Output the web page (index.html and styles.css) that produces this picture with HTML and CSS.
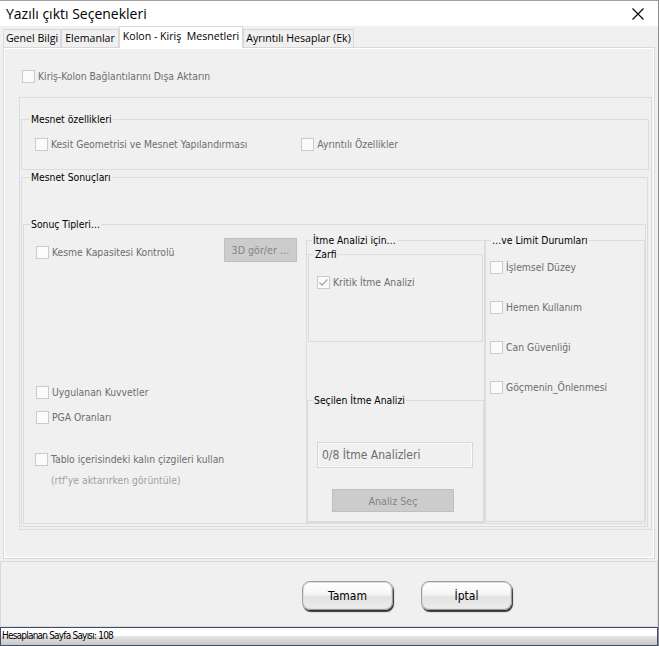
FILE: index.html
```html
<!DOCTYPE html>
<html lang="tr">
<head>
  <meta charset="UTF-8">
  <title>Yazılı çıktı Seçenekleri</title>
  <link rel="stylesheet" href="styles.css">
</head>
<body>
  <div class="window">
    <div class="titlebar">
      <span class="title">Yazılı çıktı Seçenekleri</span>
      <svg class="close" width="12" height="12" viewBox="0 0 12 12">
        <path d="M0.5 0.5 L11.5 11.5 M11.5 0.5 L0.5 11.5" stroke="#000" stroke-width="1.1" fill="none"/>
      </svg>
    </div>

    <div class="tabs">
      <div class="tab t1">Genel Bilgi</div>
      <div class="tab t2">Elemanlar</div>
      <div class="tab t3 active">Kolon - Kiriş&nbsp; Mesnetleri</div>
      <div class="tab t4">Ayrıntılı Hesaplar (Ek)</div>
    </div>

    <div class="page">
      <label class="check export"><span class="box"></span>Kiriş-Kolon Bağlantılarını Dışa Aktarın</label>

      <div class="panel">
        <fieldset class="props">
          <legend>Mesnet özellikleri</legend>
          <div class="props-row">
            <label class="check"><span class="box"></span>Kesit Geometrisi ve Mesnet Yapılandırması</label>
            <label class="check detail"><span class="box"></span>Ayrıntılı Özellikler</label>
          </div>
        </fieldset>

        <fieldset class="results">
          <legend>Mesnet Sonuçları</legend>
          <fieldset class="types">
            <legend>Sonuç Tipleri…</legend>
            <div class="types-cols">
              <div class="col-left">
                <div class="shear-row">
                  <label class="check"><span class="box"></span>Kesme Kapasitesi Kontrolü</label>
                  <button class="gray-btn view3d">3D gör/er …</button>
                </div>
                <label class="check forces"><span class="box"></span>Uygulanan Kuvvetler</label>
                <label class="check pga"><span class="box"></span>PGA Oranları</label>
                <label class="check bold-lines"><span class="box"></span>Tablo içerisindeki kalın çizgileri kullan</label>
                <div class="hint">(rtf'ye aktarırken görüntüle)</div>
              </div>

              <fieldset class="pushover">
                <legend>İtme Analizi için…</legend>
                <fieldset class="envelope">
                  <legend>Zarfi</legend>
                  <label class="check critical">
                    <span class="box">
                      <svg width="11" height="11" viewBox="0 0 11 11"><path d="M1.5 5.5 L4 8 L9.5 2.5" stroke="#a8a8a8" stroke-width="1.3" fill="none"/></svg>
                    </span>Kritik İtme Analizi
                  </label>
                </fieldset>
                <fieldset class="selected">
                  <legend>Seçilen İtme Analizi</legend>
                  <div class="count-box">0/8 İtme Analizleri</div>
                  <button class="gray-btn pick">Analiz Seç</button>
                </fieldset>
              </fieldset>

              <fieldset class="limits">
                <legend>…ve Limit Durumları</legend>
                <label class="check"><span class="box"></span>İşlemsel Düzey</label>
                <label class="check"><span class="box"></span>Hemen Kullanım</label>
                <label class="check"><span class="box"></span>Can Güvenliği</label>
                <label class="check"><span class="box"></span>Göçmenin_Önlenmesi</label>
              </fieldset>
            </div>
          </fieldset>
        </fieldset>
      </div>
    </div>

    <div class="footer">
      <button class="btn">Tamam</button>
      <button class="btn">İptal</button>
    </div>

    <div class="status">Hesaplanan Sayfa Sayısı: 108</div>
  </div>
</body>
</html>
```

FILE: styles.css
```css
* {
  box-sizing: border-box;
}

body {
  margin: 0;
  background-color: #f0f0f0;
  font-family: "DejaVu Sans Condensed", "DejaVu Sans", sans-serif;
  font-stretch: condensed;
  font-size: 10.3px;
}

.window {
  width: 659px;
  height: 646px;
  display: flex;
  flex-direction: column;
  border-right: 1px solid #8c8c8c;
  overflow: hidden;
}

.titlebar {
  height: 26px;
  flex: none;
  background-color: #fff;
  border-top: 1px solid #a0a0a0;
  display: flex;
  align-items: center;
  justify-content: space-between;
  padding: 0 14px 0 6px;
}

.title {
  font-family: "Open Sans", sans-serif;
  font-stretch: normal;
  font-size: 14px;
  color: #000;
}

/* tabs */
.tabs {
  height: 21px;
  flex: none;
  display: flex;
  align-items: flex-end;
  padding-left: 3px;
  font-family: "Open Sans", sans-serif;
  font-stretch: normal;
  font-size: 10.6px;
}

.tab {
  height: 18px;
  border: 1px solid #d9d9d9;
  border-bottom: none;
  background-color: #f0f0f0;
  text-align: center;
  line-height: 16px;
  color: #000;
  white-space: nowrap;
}

.t1 { width: 58px; }
.t2 { width: 58px; }
.t3 { width: 124px; }
.t4 { width: 111px; }

.tab.active {
  height: 22px;
  margin-bottom: -1px;
  background-color: #fff;
  line-height: 18px;
  position: relative;
  z-index: 1;
}

/* page */
.page {
  height: 512px;
  flex: none;
  margin: 0 3px;
  border: 1px solid #d9d9d9;
  box-shadow: inset 0 0 0 1px #fff;
}

.check {
  display: flex;
  align-items: center;
  height: 14px;
  color: #6d6d6d;
  white-space: nowrap;
}

.box {
  width: 13px;
  height: 13px;
  flex: none;
  margin-right: 3px;
  border: 1px solid #cbcbcb;
  background-color: #fbfbfb;
  display: flex;
  align-items: center;
  justify-content: center;
}

.export {
  margin: 21px 0 0 18px;
}

.panel {
  margin: 14px 0 0 15px;
  width: 633px;
  height: 433px;
  border: 1px solid #dcdcdc;
}

fieldset {
  margin: 0;
  padding: 0;
  min-width: 0;
  border: 1px solid #dcdcdc;
}

legend {
  padding: 0 1px;
  line-height: 14px;
  font-size: 10.3px;
  color: #000;
}

.props {
  margin: 14px 0 0 1px;
  width: 628px;
  height: 58px;
}

.props legend { margin-left: 8px; }

.props-row {
  display: flex;
  padding: 11px 0 0 13px;
}

.detail {
  margin-left: 54px;
}

.results {
  margin-left: 1px;
  width: 627px;
  height: 357px;
}

.results legend { margin-left: 8px; }

.types {
  margin: 33px 0 0 1px;
  width: 623px;
  height: 307px;
}

.types legend { margin-left: 6px; }

.types-cols {
  display: flex;
  align-items: flex-start;
}

.col-left {
  width: 282px;
  padding: 7px 0 0 12px;
  display: flex;
  flex-direction: column;
}

.shear-row {
  display: flex;
  justify-content: space-between;
  padding-right: 9px;
}

.shear-row .check {
  margin-top: 7px;
}

.gray-btn {
  background-color: #cccccc;
  border: 1px solid #bfbfbf;
  color: #838383;
  font-family: inherit;
  font-stretch: condensed;
  font-size: 10.6px;
  padding: 0;
}

.view3d {
  width: 73px;
  height: 24px;
}

.forces { margin-top: 123px; }
.pga { margin-top: 11px; }
.bold-lines { margin-top: 28px; margin-left: -1px; }

.hint {
  margin: 7px 0 0 15px;
  line-height: 14px;
  color: #a0a0a0;
}

.pushover {
  margin-top: 2px;
  width: 179px;
  height: 290px;
}

.pushover legend { margin-left: 5px; }

.envelope {
  margin-left: 1px;
  width: 175px;
  height: 95px;
}

.envelope legend { margin-left: 5px; }

.critical {
  margin: 14px 0 0 8px;
}

.selected {
  margin-top: 51px;
  width: 177px;
  height: 129px;
}

.selected legend { margin-left: 5px; }

.count-box {
  margin: 35px 0 0 9px;
  width: 156px;
  height: 26px;
  border: 1px solid #d6d6d6;
  box-shadow: inset 0 0 0 1px #fafafa;
  padding-left: 4px;
  line-height: 24px;
  font-size: 12px;
  color: #6d6d6d;
}

.pick {
  display: block;
  margin: 21px 0 0 24px;
  width: 122px;
  height: 23px;
}

.limits {
  margin-top: 2px;
  width: 160px;
  height: 289px;
}

.limits legend { margin-left: 5px; }

.limits .check {
  margin: 13px 0 26px 4px;
}

/* bottom */
.footer {
  height: 66px;
  flex: none;
  margin-top: 2px;
  border: 1px solid #dadada;
  display: flex;
  align-items: flex-start;
  padding: 19px 0 0 301px;
  gap: 28px;
}

.btn {
  width: 91px;
  height: 29px;
  border: 1px solid #9c9c9c;
  border-radius: 8px;
  background: linear-gradient(#ffffff, #f6f6f6 45%, #e2e2e2 55%, #ececec);
  box-shadow: 1px 2px 1px #333, inset 0 0 0 1px #e0e0e0;
  font-family: "DejaVu Sans Condensed", "DejaVu Sans", sans-serif;
  font-stretch: condensed;
  font-size: 12px;
  color: #000;
  padding: 0;
}

.status {
  height: 19px;
  flex: none;
  border: 1px solid #3e4f6d;
  background: linear-gradient(#fff, #fff 45%, #e4e4e4 50%, #c8c8c8);
  font-family: "DejaVu Sans Condensed", "DejaVu Sans", sans-serif;
  font-stretch: condensed;
  font-size: 10px;
  letter-spacing: -0.8px;
  line-height: 16px;
  padding-left: 1px;
  color: #000;
}
```
